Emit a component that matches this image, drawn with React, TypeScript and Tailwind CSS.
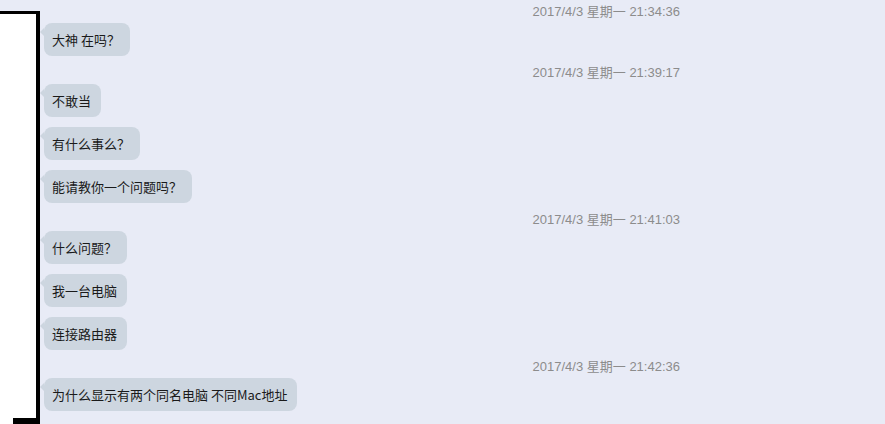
import React from 'react';

type Item = { kind: 'time'; text: string } | { kind: 'msg'; text: string };

const ITEMS: Item[] = [
  { kind: 'time', text: '2017/4/3 星期一 21:34:36' },
  { kind: 'msg', text: '大神 在吗？' },
  { kind: 'time', text: '2017/4/3 星期一 21:39:17' },
  { kind: 'msg', text: '不敢当' },
  { kind: 'msg', text: '有什么事么？' },
  { kind: 'msg', text: '能请教你一个问题吗？' },
  { kind: 'time', text: '2017/4/3 星期一 21:41:03' },
  { kind: 'msg', text: '什么问题？' },
  { kind: 'msg', text: '我一台电脑' },
  { kind: 'msg', text: '连接路由器' },
  { kind: 'time', text: '2017/4/3 星期一 21:42:36' },
  { kind: 'msg', text: '为什么显示有两个同名电脑 不同Mac地址' },
];

const Bubble: React.FC<{ text: string }> = ({ text }) => (
  <div className="relative flex">
    {/* little tail on the left */}
    <div className="absolute left-[-4px] top-[5px] w-0 h-0 border-y-[4px] border-y-transparent border-r-[4px] border-r-[#cdd6e0]"></div>
    <div className="bg-[#cdd6e0] rounded-[8px] pl-[8px] pr-[10px] py-[8px] text-[13px] leading-[17px] text-[#1a1a1a] whitespace-nowrap">
      {text}
    </div>
  </div>
);

const App: React.FC = () => {
  return (
    <div
      className="flex w-full h-[424px] overflow-hidden bg-[#e8ebf6]"
      style={{ fontFamily: '"Noto Sans CJK SC", "Liberation Sans", sans-serif' }}
    >
      {/* Redacted avatar strip */}
      <div className="w-[40px] shrink-0 flex flex-col pt-[11px]">
        <div className="flex-1 bg-white border-t-[3px] border-r-[4px] border-black flex flex-col justify-end">
          <div className="h-[6px] ml-[13px] bg-black"></div>
        </div>
      </div>

      {/* Chat log */}
      <div className="flex-1 flex flex-col items-start pl-[4px] pr-[205px] pt-[3px]">
        {ITEMS.map((it, i) =>
          it.kind === 'time' ? (
            <div
              key={i}
              className={`self-end text-[13px] leading-[17px] text-[#8c8c8c] mb-[3px] ${i === 0 ? '' : 'mt-[8px]'}`}
              style={{ fontFamily: '"Liberation Sans", "Noto Sans CJK SC", sans-serif' }}
            >
              {it.text}
            </div>
          ) : (
            <div key={i} className={ITEMS[i - 1]?.kind === 'msg' ? 'mt-[10px]' : ''}>
              <Bubble text={it.text} />
            </div>
          )
        )}
      </div>
    </div>
  );
};

export default App;
